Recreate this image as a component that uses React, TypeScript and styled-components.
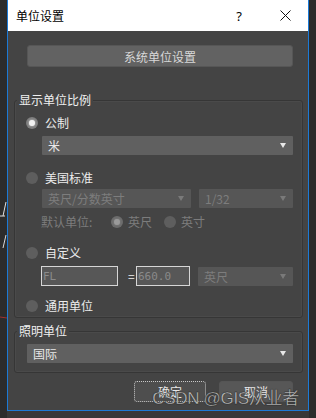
import React from 'react'
import styled, { createGlobalStyle } from 'styled-components'

const GlobalStyle = createGlobalStyle`
  html, body {
    margin: 0;
    padding: 0;
    background: #363636;
    font-family: "Noto Sans CJK SC", "Noto Sans", sans-serif;
  }
`

const Page = styled.div`
  display: flex;
  width: 316px;
  height: 418px;
  overflow: hidden;
  background: #383838;
`

const Gutter = styled.div`
  width: 7px;
  height: 418px;
  background: #2c2c2c;
  flex: none;
`

const Window = styled.div`
  position: relative;
  width: 300px;
  height: 410px;
  border: 1px solid #1c7ad6;
  border-top: none;
  background: #444444;
  display: flex;
  flex-direction: column;
  flex: none;
`

const RightEdge = styled.div`
  flex: 1;
  background: #2c2c2c;
`

const TitleBar = styled.div`
  height: 31px;
  background: #ffffff;
  display: flex;
  align-items: center;
  padding-left: 8px;
  color: #000;
  font-size: 12px;
`

const Title = styled.div`
  flex: 1;
`

const TitleBtn = styled.div<{ $w: number }>`
  width: ${p => p.$w}px;
  height: 31px;
  display: flex;
  align-items: center;
  justify-content: center;
  font-family: "Noto Sans", sans-serif;
  font-size: 13px;
`

const Body = styled.div`
  display: flex;
  flex-direction: column;
  padding: 14px 0 0 0;
  color: #e6e6e6;
  font-size: 12px;
`

const SysButton = styled.div`
  margin: 0 15px 0 19px;
  height: 20px;
  border: 1px solid #565656;
  border-radius: 3px;
  background: #626262;
  color: #d8d8d8;
  display: flex;
  align-items: center;
  justify-content: center;
`

const Group = styled.div<{ $top: number; $h: number }>`
  position: relative;
  margin: ${p => p.$top}px 5px 0 6px;
  height: ${p => p.$h}px;
  border: 1px solid #363636;
  border-radius: 3px;
  box-shadow: inset 0 0 0 1px #4a4a4a;
  display: flex;
  flex-direction: column;
`

const Legend = styled.div`
  position: absolute;
  left: 2px;
  top: -9px;
  padding: 0 2px;
  background: #444444;
  color: #f0f0f0;
  line-height: 16px;
`

const Row = styled.div<{ $top: number }>`
  display: flex;
  align-items: center;
  gap: 7px;
  height: 16px;
  margin: ${p => p.$top}px 9px 0 11px;
`

const Radio = styled.span<{ $on?: boolean; $dim?: boolean }>`
  width: 12px;
  height: 12px;
  border-radius: 50%;
  flex: none;
  background: ${p => (p.$on ? (p.$dim ? '#6c6c6c' : '#7e7e7e') : '#5e5e5e')};
  display: flex;
  align-items: center;
  justify-content: center;
  &::after {
    content: '';
    display: ${p => (p.$on ? 'block' : 'none')};
    width: 6px;
    height: 6px;
    border-radius: 50%;
    background: ${p => (p.$dim ? '#9a9a9a' : '#f2f2f2')};
    box-shadow: 0 0 2px ${p => (p.$dim ? '#8a8a8a' : '#dddddd')};
  }
`

const Label = styled.span<{ $dim?: boolean; $w?: number }>`
  color: ${p => (p.$dim ? '#7c7c7c' : '#ececec')};
  line-height: 16px;
  white-space: nowrap;
  ${p => (p.$w ? `width: ${p.$w}px; flex: none;` : '')}
`

const Select = styled.div<{ $w?: number; $dim?: boolean }>`
  height: 19px;
  ${p => (p.$w ? `width: ${p.$w}px; flex: none;` : 'flex: 1;')}
  background: ${p => (p.$dim ? '#565656' : '#606060')};
  color: ${p => (p.$dim ? '#7d7d7d' : '#e8e8e8')};
  display: flex;
  align-items: center;
  padding: 0 7px 0 6px;
  box-sizing: border-box;
  border-radius: 1px;
  span {
    flex: 1;
  }
`

const Arrow = styled.i<{ $dim?: boolean }>`
  width: 0;
  height: 0;
  border-left: 3.5px solid transparent;
  border-right: 3.5px solid transparent;
  border-top: 5px solid ${p => (p.$dim ? '#7a7a7a' : '#e8e8e8')};
`

const Line = styled.div<{ $top: number; $left?: number; $gap?: number }>`
  display: flex;
  align-items: center;
  gap: ${p => (p.$gap ?? 8)}px;
  margin: ${p => p.$top}px 9px 0 ${p => p.$left ?? 27}px;
`

const UnitPick = styled.div`
  display: flex;
  align-items: center;
  height: 16px;
  margin: 6px 9px 0 26px;
`

const UnitRadio = styled(Radio)`
  margin: 0 5px 0 0;
`

const Field = styled.div<{ $w: number }>`
  width: ${p => p.$w}px;
  height: 20px;
  box-sizing: border-box;
  border: 1px solid #d6d6d6;
  background: #575757;
  color: #8a8a8a;
  font-family: "DejaVu Sans Mono", monospace;
  font-size: 11px;
  display: flex;
  align-items: center;
  padding-left: 1px;
  flex: none;
`

const Equals = styled.span`
  color: #eeeeee;
  width: 7px;
  flex: none;
  margin: 0 1px 0 10px;
  line-height: 16px;
`

const Footer = styled.div`
  display: flex;
  justify-content: flex-end;
  gap: 13px;
  margin: 8px 15px 0 0;
`

const Btn = styled.div<{ $w: number; $focus?: boolean }>`
  width: ${p => p.$w}px;
  height: 21px;
  box-sizing: border-box;
  border-radius: 3px;
  background: ${p => (p.$focus ? '#4e4e4e' : '#575757')};
  border: 1px ${p => (p.$focus ? 'dotted #c8c8c8' : 'solid #555555')};
  color: #e6e6e6;
  display: flex;
  align-items: center;
  justify-content: center;
`

const Watermark = styled.div`
  position: absolute;
  right: 9px;
  bottom: 1px;
  font-family: "Liberation Sans", "Noto Sans CJK SC", sans-serif;
  font-size: 17px;
  color: rgba(215, 215, 215, 0.85);
  -webkit-text-stroke: 0.3px #2a2a2a;
  text-shadow: 0 0 1px #222;
  letter-spacing: -0.3px;
  pointer-events: none;
`

function Scraps() {
  return (
    <svg width="7" height="418" viewBox="0 0 7 418">
      <path d="M6 202 L3 216 M0 216 L5 216" stroke="#e0e0e0" strokeWidth="1" fill="none" />
      <path d="M6 235 L3 248" stroke="#d8d8d8" strokeWidth="1" fill="none" />
      <path d="M0 317 L7 318" stroke="#a03030" strokeWidth="1" fill="none" />
    </svg>
  )
}

export default function App() {
  return (
    <>
      <GlobalStyle />
      <Page>
        <Gutter>
          <Scraps />
        </Gutter>
        <Window>
          <TitleBar>
            <Title>单位设置</Title>
            <TitleBtn $w={46}>?</TitleBtn>
            <TitleBtn $w={46}>
              <svg width="11" height="11" viewBox="0 0 11 11">
                <path d="M0.5 0.5 L10.5 10.5 M10.5 0.5 L0.5 10.5" stroke="#111" strokeWidth="1" />
              </svg>
            </TitleBtn>
          </TitleBar>
          <Body>
            <SysButton>系统单位设置</SysButton>

            <Group $top={33} $h={216}>
              <Legend>显示单位比例</Legend>
              <Row $top={14}>
                <Radio $on />
                <Label>公制</Label>
              </Row>
              <Line $top={5}>
                <Select>
                  <span>米</span>
                  <Arrow />
                </Select>
              </Line>
              <Row $top={15}>
                <Radio />
                <Label>美国标准</Label>
              </Row>
              <Line $top={3}>
                <Select $dim $w={149}>
                  <span>英尺/分数英寸</span>
                  <Arrow $dim />
                </Select>
                <Select $dim>
                  <span>1/32</span>
                  <Arrow $dim />
                </Select>
              </Line>
              <UnitPick>
                <Label $dim $w={70}>默认单位:</Label>
                <UnitRadio $on $dim />
                <Label $dim $w={36}>英尺</Label>
                <UnitRadio />
                <Label $dim>英寸</Label>
              </UnitPick>
              <Row $top={15}>
                <Radio />
                <Label>自定义</Label>
              </Row>
              <Line $top={5} $left={26} $gap={0}>
                <Field $w={77}>FL</Field>
                <Equals>=</Equals>
                <Field $w={54}>660.0</Field>
                <Select $dim style={{ marginLeft: 8 }}>
                  <span>英尺</span>
                  <Arrow $dim />
                </Select>
              </Line>
              <Row $top={12}>
                <Radio />
                <Label>通用单位</Label>
              </Row>
            </Group>

            <Group $top={13} $h={40}>
              <Legend>照明单位</Legend>
              <Line $top={12} $left={12}>
                <Select>
                  <span>国际</span>
                  <Arrow />
                </Select>
              </Line>
            </Group>

            <Footer>
              <Btn $w={72} $focus>确定</Btn>
              <Btn $w={74}>取消</Btn>
            </Footer>
          </Body>
          <Watermark>CSDN @GIS从业者</Watermark>
        </Window>
        <RightEdge />
      </Page>
    </>
  )
}
